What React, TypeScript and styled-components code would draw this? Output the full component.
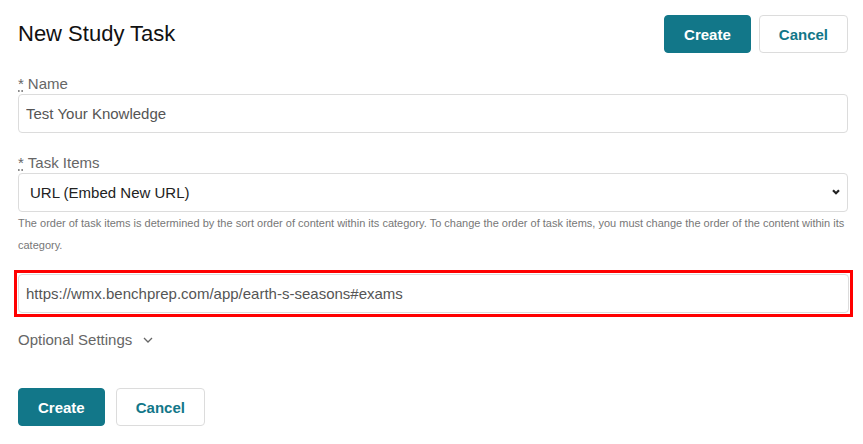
import styled, { createGlobalStyle } from "styled-components";

const GlobalStyle = createGlobalStyle`
  * {
    box-sizing: border-box;
  }

  body {
    margin: 0;
    background: #fff;
    font-family: "Liberation Sans", Arial, sans-serif;
  }
`;

const teal = "#127789";

const Page = styled.main`
  display: flex;
  flex-direction: column;
  padding: 15px 15px 18px 18px;
`;

const Header = styled.div`
  display: flex;
  align-items: center;
  justify-content: space-between;
  margin-bottom: 21px;
`;

const Title = styled.h1`
  margin: 0;
  font-size: 22px;
  font-weight: 400;
  color: #111;
`;

const ButtonRow = styled.div<{ $gap: number }>`
  display: flex;
  gap: ${(props) => props.$gap}px;
`;

const Button = styled.button<{ $primary?: boolean }>`
  height: 38px;
  padding: 0 19px;
  border-radius: 4px;
  border: 1px solid ${(props) => (props.$primary ? teal : "#dcdcdc")};
  background: ${(props) => (props.$primary ? teal : "#fff")};
  color: ${(props) => (props.$primary ? "#fff" : teal)};
  font-family: inherit;
  font-size: 15px;
  font-weight: 700;
  cursor: pointer;
`;

const Field = styled.div<{ $gap?: number }>`
  display: flex;
  flex-direction: column;
  margin-bottom: ${(props) => props.$gap ?? 0}px;
`;

const Label = styled.label`
  font-size: 15px;
  line-height: 20px;
  color: #666;

  abbr {
    text-decoration: underline dotted;
    text-underline-offset: 2px;
    margin-right: 4px;
    cursor: help;
  }
`;

const TextInput = styled.input`
  width: 100%;
  height: 39px;
  padding: 0 7px;
  border: 1px solid #dcdcdc;
  border-radius: 4px;
  font-family: inherit;
  font-size: 15px;
  color: #555;
  outline: none;
`;

/* red annotation box drawn around the URL field */
const Highlight = styled.div`
  margin: 0 -5px 13px -4px;
  padding: 1px;
  border: 3px solid #f00;
`;

const SelectWrap = styled.div`
  position: relative;
`;

const Select = styled.select`
  width: 100%;
  height: 39px;
  padding: 0 30px 0 11px;
  border: 1px solid #dcdcdc;
  border-radius: 4px;
  background: #fff;
  appearance: none;
  font-family: inherit;
  font-size: 15px;
  color: #222;
  outline: none;
`;

const SelectArrow = styled.svg`
  position: absolute;
  right: 8px;
  top: 16px;
  pointer-events: none;
`;

const Help = styled.p`
  margin: 0;
  font-size: 11px;
  line-height: 22px;
  color: #777;
`;

const Toggle = styled.button`
  display: flex;
  align-items: center;
  gap: 11px;
  align-self: flex-start;
  margin: 0 0 38px;
  padding: 0;
  border: 0;
  background: none;
  font-family: inherit;
  font-size: 15px;
  line-height: 20px;
  color: #666;
  cursor: pointer;
`;

function Actions({ gap }: { gap: number }) {
  return (
    <ButtonRow $gap={gap}>
      <Button $primary>Create</Button>
      <Button>Cancel</Button>
    </ButtonRow>
  );
}

export default function App() {
  return (
    <>
      <GlobalStyle />
      <Page>
        <Header>
          <Title>New Study Task</Title>
          <Actions gap={8} />
        </Header>

        <Field $gap={20}>
          <Label htmlFor="task-name">
            <abbr title="required">*</abbr>Name
          </Label>
          <TextInput id="task-name" defaultValue="Test Your Knowledge" />
        </Field>

        <Field $gap={14}>
          <Label htmlFor="task-items">
            <abbr title="required">*</abbr>Task Items
          </Label>
          <SelectWrap>
            <Select id="task-items" defaultValue="url">
              <option value="url">URL (Embed New URL)</option>
            </Select>
            <SelectArrow width="8" height="6" viewBox="0 0 8 6">
              <path d="M1 1.2 4 4.2 7 1.2" fill="none" stroke="#222" strokeWidth="2.2" />
            </SelectArrow>
          </SelectWrap>
          <Help>
            The order of task items is determined by the sort order of content within its category. To change the
            order of task items, you must change the order of the content within its category.
          </Help>
        </Field>

        <Highlight>
          <TextInput defaultValue="https://wmx.benchprep.com/app/earth-s-seasons#exams" />
        </Highlight>

        <Toggle type="button">
          Optional Settings
          <svg width="10" height="6" viewBox="0 0 10 6">
            <path d="M1 1 5 5 9 1" fill="none" stroke="#666" strokeWidth="1.3" />
          </svg>
        </Toggle>

        <Actions gap={11} />
      </Page>
    </>
  );
}
